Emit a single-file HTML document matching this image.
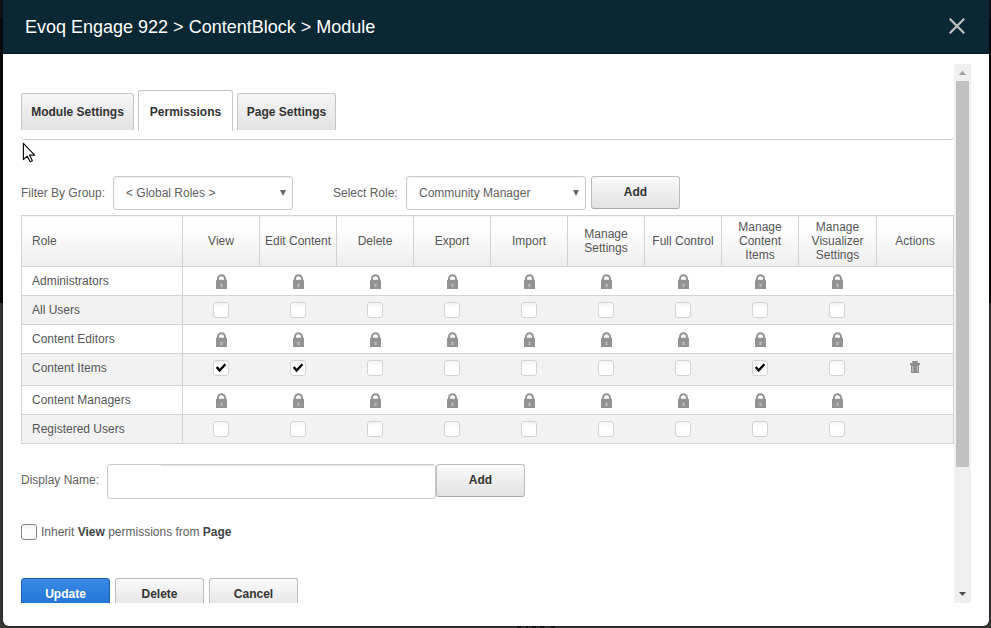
<!DOCTYPE html>
<html><head><meta charset="utf-8">
<style>
*{box-sizing:border-box;margin:0;padding:0}
html,body{width:991px;height:628px;overflow:hidden}
body{background:linear-gradient(#141414 0,#141414 18px,#0a0a0a 18px);font-family:"Liberation Sans",sans-serif;position:relative;color:#333}
#bg2{position:absolute;left:0;top:303px;width:991px;height:325px;background:#3a3937}
#modal{position:absolute;left:3px;top:0;width:986px;height:626px;background:#fff;border-radius:0 0 6px 6px;overflow:hidden;box-shadow:0 0 3px 1px rgba(0,0,0,.4)}
#hdr{position:absolute;left:0;top:0;width:986px;height:54px;background:#0a2734;border-bottom:1px solid #051820}
#title{position:absolute;left:22px;top:17px;font-size:18px;color:#fff;white-space:nowrap}
#close{position:absolute;left:943px;top:15px;width:22px;height:22px}
#clip{position:absolute;left:0;top:0;width:986px;height:603px;overflow:hidden}
#scroll{position:absolute;left:951px;top:64px;width:17px;height:539px;background:#f0f0f0}
#thumb{position:absolute;left:2px;top:17px;width:13px;height:386px;background:#c1c1c1}
.tab{position:absolute;top:93px;height:37px;border:1px solid #c6c6c6;border-bottom:none;border-radius:3px 3px 0 0;background:linear-gradient(#f6f6f6,#e2e2e2);font-size:12px;font-weight:bold;color:#333;text-align:center;line-height:36px}
.tab.active{top:90px;height:41px;background:#fff;line-height:42px}
#rule{position:absolute;left:18px;top:130px;width:933px;height:10px;border-bottom:1px solid #cacaca;border-radius:0 0 4px 4px}
.lbl{position:absolute;font-size:12px;color:#606060;white-space:nowrap}
.sel{position:absolute;height:34px;border:1px solid #c9c9c9;border-radius:3px;background:#fff;font-size:12px;color:#606060;line-height:33px;padding-left:12px;box-shadow:inset 0 1px 2px rgba(0,0,0,.07)}
.sel.dd:after{content:"";position:absolute;right:6px;top:13px;border-left:3px solid transparent;border-right:3px solid transparent;border-top:6px solid #666}
.btn{position:absolute;border:1px solid #bdbdbd;border-bottom-color:#a8a8a8;border-radius:3px;background:linear-gradient(#fafafa,#e2e2e2);font-size:12px;font-weight:bold;color:#333;text-align:center}
.btn.blue{background:linear-gradient(#3a8ae6,#1f6fd3);border-color:#1a5bb0;color:#fff}
table{position:absolute;left:18px;top:215px;border-collapse:collapse;font-size:12px;color:#555}
td,th{font-weight:normal;text-align:center;padding:0;border-top:1px solid #d2d2d2;border-bottom:1px solid #d2d2d2}
th{background:linear-gradient(#fefefe 25%,#eeeeee);height:51px;line-height:14px;border:1px solid #d2d2d2}
td:first-child{border-left:1px solid #d2d2d2;border-right:1px solid #d2d2d2}
td:last-child{border-right:1px solid #d2d2d2}
td.r{text-align:left;padding-left:10px}
tr.alt td{background:#f2f2f2}
tr.ci td{padding-bottom:3px}
.lock{display:inline-block;width:11px;height:15px;vertical-align:middle;position:relative;left:0px;top:0.5px}
.cb{display:inline-block;width:16px;height:16px;border:1px solid #d3d3d3;border-radius:3px;background:linear-gradient(#f4f4f4,#fff 40%);vertical-align:middle;position:relative}
td:nth-child(10) .cb{left:-1px}
.cb svg{position:absolute;left:-1px;top:-1px;width:16px;height:16px}
.trash{display:inline-block;width:10px;height:12px;vertical-align:middle;position:relative;top:-2px}
#cursor{position:absolute;left:19px;top:142px;width:14px;height:21px}
</style></head><body>
<svg width="0" height="0" style="position:absolute"><defs>
<g id="lk"><path d="M2 6.5V4.7A3.5 3.5 0 0 1 9 4.7V6.5" fill="none" stroke="#939393" stroke-width="2"/><rect x="0" y="5.8" width="11" height="9.7" rx="0.4" fill="#939393"/><rect x="4.5" y="9.8" width="2" height="1.4" fill="#fff" opacity=".5"/><rect x="4.5" y="11.6" width="2" height="1.3" fill="#fff" opacity=".5"/></g>
<g id="ck"><path d="M3.7 7L6.6 10.5L12.4 4.2" fill="none" stroke="#000" stroke-width="2.4" stroke-linejoin="miter"/></g>
<g id="tr"><rect x="2.3" y="0" width="5.5" height="2.3" fill="#8c8c8c"/><rect x="0" y="2" width="10" height="2" fill="#8c8c8c"/><rect x="1" y="4" width="8" height="8" fill="#8c8c8c"/><rect x="2.3" y="5" width="0.9" height="6" fill="#cdcdcd"/><rect x="6.8" y="5" width="0.9" height="6" fill="#cdcdcd"/></g>
</defs></svg>
<div id="bg2"></div><div style="position:absolute;left:517px;top:626px;width:4px;height:2px;background:#161616"></div><div style="position:absolute;left:526px;top:626px;width:2px;height:2px;background:#161616"></div><div style="position:absolute;left:532px;top:626px;width:4px;height:2px;background:#161616"></div><div style="position:absolute;left:540px;top:626px;width:4px;height:2px;background:#161616"></div><div style="position:absolute;left:551px;top:626px;width:4px;height:2px;background:#161616"></div>
<div id="modal">
  <div id="hdr"><div id="title">Evoq Engage 922 &gt; ContentBlock &gt; Module</div>
    <svg id="close" viewBox="0 0 22 22"><path d="M3.8 3.8L18.2 18.2M18.2 3.8L3.8 18.2" stroke="#bfbfbf" stroke-width="2.3"/></svg>
  </div>
  <div id="clip">
  <div id="scroll"><svg style="position:absolute;left:0;top:0" width="17" height="20"><polygon points="4.9,11 8.5,6.8 12.1,11" fill="#a3a3a3"/></svg><div id="thumb"></div><svg style="position:absolute;left:0;top:520px" width="17" height="19"><polygon points="4.9,8 8.5,12 12.1,8" fill="#505050"/></svg></div>

  <div id="rule"></div>
  <div class="tab" style="left:18px;width:113px">Module Settings</div>
  <div class="tab active" style="left:135px;width:95px">Permissions</div>
  <div class="tab" style="left:234px;width:99px">Page Settings</div>

  <div class="lbl" style="left:18px;top:186px">Filter By Group:</div>
  <div class="sel dd" style="left:110px;top:176px;width:180px">&lt; Global Roles &gt;</div>
  <div class="lbl" style="left:330px;top:186px">Select Role:</div>
  <div class="sel dd" style="left:403px;top:176px;width:180px">Community Manager</div>
  <div class="btn" style="left:588px;top:176px;width:89px;height:33px;line-height:30px">Add</div>

  <table>
    <tr><th style="width:161px;text-align:left;padding-left:10px">Role</th><th style="width:77px">View</th><th style="width:77px">Edit Content</th><th style="width:77px">Delete</th><th style="width:77px">Export</th><th style="width:77px">Import</th><th style="width:77px">Manage<br>Settings</th><th style="width:77px">Full Control</th><th style="width:77px">Manage<br>Content<br>Items</th><th style="width:78px">Manage<br>Visualizer<br>Settings</th><th style="width:77px">Actions</th></tr>
<tr style="height:29px"><td class="r">Administrators</td><td><svg class="lock" viewBox="0 0 11 15"><use href="#lk"/></svg></td><td><svg class="lock" viewBox="0 0 11 15"><use href="#lk"/></svg></td><td><svg class="lock" viewBox="0 0 11 15"><use href="#lk"/></svg></td><td><svg class="lock" viewBox="0 0 11 15"><use href="#lk"/></svg></td><td><svg class="lock" viewBox="0 0 11 15"><use href="#lk"/></svg></td><td><svg class="lock" viewBox="0 0 11 15"><use href="#lk"/></svg></td><td><svg class="lock" viewBox="0 0 11 15"><use href="#lk"/></svg></td><td><svg class="lock" viewBox="0 0 11 15"><use href="#lk"/></svg></td><td><svg class="lock" viewBox="0 0 11 15"><use href="#lk"/></svg></td><td></td></tr>
<tr class="alt" style="height:29px"><td class="r">All Users</td><td><span class="cb"></span></td><td><span class="cb"></span></td><td><span class="cb"></span></td><td><span class="cb"></span></td><td><span class="cb"></span></td><td><span class="cb"></span></td><td><span class="cb"></span></td><td><span class="cb"></span></td><td><span class="cb"></span></td><td></td></tr>
<tr style="height:29px"><td class="r">Content Editors</td><td><svg class="lock" viewBox="0 0 11 15"><use href="#lk"/></svg></td><td><svg class="lock" viewBox="0 0 11 15"><use href="#lk"/></svg></td><td><svg class="lock" viewBox="0 0 11 15"><use href="#lk"/></svg></td><td><svg class="lock" viewBox="0 0 11 15"><use href="#lk"/></svg></td><td><svg class="lock" viewBox="0 0 11 15"><use href="#lk"/></svg></td><td><svg class="lock" viewBox="0 0 11 15"><use href="#lk"/></svg></td><td><svg class="lock" viewBox="0 0 11 15"><use href="#lk"/></svg></td><td><svg class="lock" viewBox="0 0 11 15"><use href="#lk"/></svg></td><td><svg class="lock" viewBox="0 0 11 15"><use href="#lk"/></svg></td><td></td></tr>
<tr class="alt ci" style="height:32px"><td class="r">Content Items</td><td><span class="cb"><svg viewBox="0 0 16 16"><use href="#ck"/></svg></span></td><td><span class="cb"><svg viewBox="0 0 16 16"><use href="#ck"/></svg></span></td><td><span class="cb"></span></td><td><span class="cb"></span></td><td><span class="cb"></span></td><td><span class="cb"></span></td><td><span class="cb"></span></td><td><span class="cb"><svg viewBox="0 0 16 16"><use href="#ck"/></svg></span></td><td><span class="cb"></span></td><td><svg class="trash" viewBox="0 0 10 12"><use href="#tr"/></svg></td></tr>
<tr style="height:29px"><td class="r">Content Managers</td><td><svg class="lock" viewBox="0 0 11 15"><use href="#lk"/></svg></td><td><svg class="lock" viewBox="0 0 11 15"><use href="#lk"/></svg></td><td><svg class="lock" viewBox="0 0 11 15"><use href="#lk"/></svg></td><td><svg class="lock" viewBox="0 0 11 15"><use href="#lk"/></svg></td><td><svg class="lock" viewBox="0 0 11 15"><use href="#lk"/></svg></td><td><svg class="lock" viewBox="0 0 11 15"><use href="#lk"/></svg></td><td><svg class="lock" viewBox="0 0 11 15"><use href="#lk"/></svg></td><td><svg class="lock" viewBox="0 0 11 15"><use href="#lk"/></svg></td><td><svg class="lock" viewBox="0 0 11 15"><use href="#lk"/></svg></td><td></td></tr>
<tr class="alt" style="height:29px"><td class="r">Registered Users</td><td><span class="cb"></span></td><td><span class="cb"></span></td><td><span class="cb"></span></td><td><span class="cb"></span></td><td><span class="cb"></span></td><td><span class="cb"></span></td><td><span class="cb"></span></td><td><span class="cb"></span></td><td><span class="cb"></span></td><td></td></tr>
  </table>

  <div class="lbl" style="left:18px;top:473px">Display Name:</div>
  <div class="sel" style="left:104px;top:464px;width:329px;height:35px;box-shadow:none"><div style="position:absolute;left:53px;right:0;top:0;height:2px;background:linear-gradient(#e9e9e9,#f7f7f7)"></div></div>
  <div class="btn" style="left:433px;top:464px;width:89px;height:33px;line-height:30px">Add</div>

  <div style="position:absolute;left:18px;top:524px;width:16px;height:16px;border:1px solid #868686;border-radius:3px;background:linear-gradient(#f3f3f3,#fff 50%,#f6f6f6)"></div>
  <div class="lbl" style="left:38px;top:525px">Inherit <b style="color:#444">View</b> permissions from <b style="color:#444">Page</b></div>

  <div class="btn blue" style="left:18px;top:578px;width:89px;height:33px;line-height:30px">Update</div>
  <div class="btn" style="left:112px;top:578px;width:89px;height:33px;line-height:30px">Delete</div>
  <div class="btn" style="left:206px;top:578px;width:89px;height:33px;line-height:30px">Cancel</div>

  <svg id="cursor" viewBox="0 0 14 21"><path d="M1.4 1.3V17.6L5.1 14.1L8.2 19.8L10.4 18.7L7.6 13.1H12.6Z" fill="#fff" stroke="#111" stroke-width="1.2" stroke-linejoin="round"/></svg>
  </div>
</div>
</body></html>
